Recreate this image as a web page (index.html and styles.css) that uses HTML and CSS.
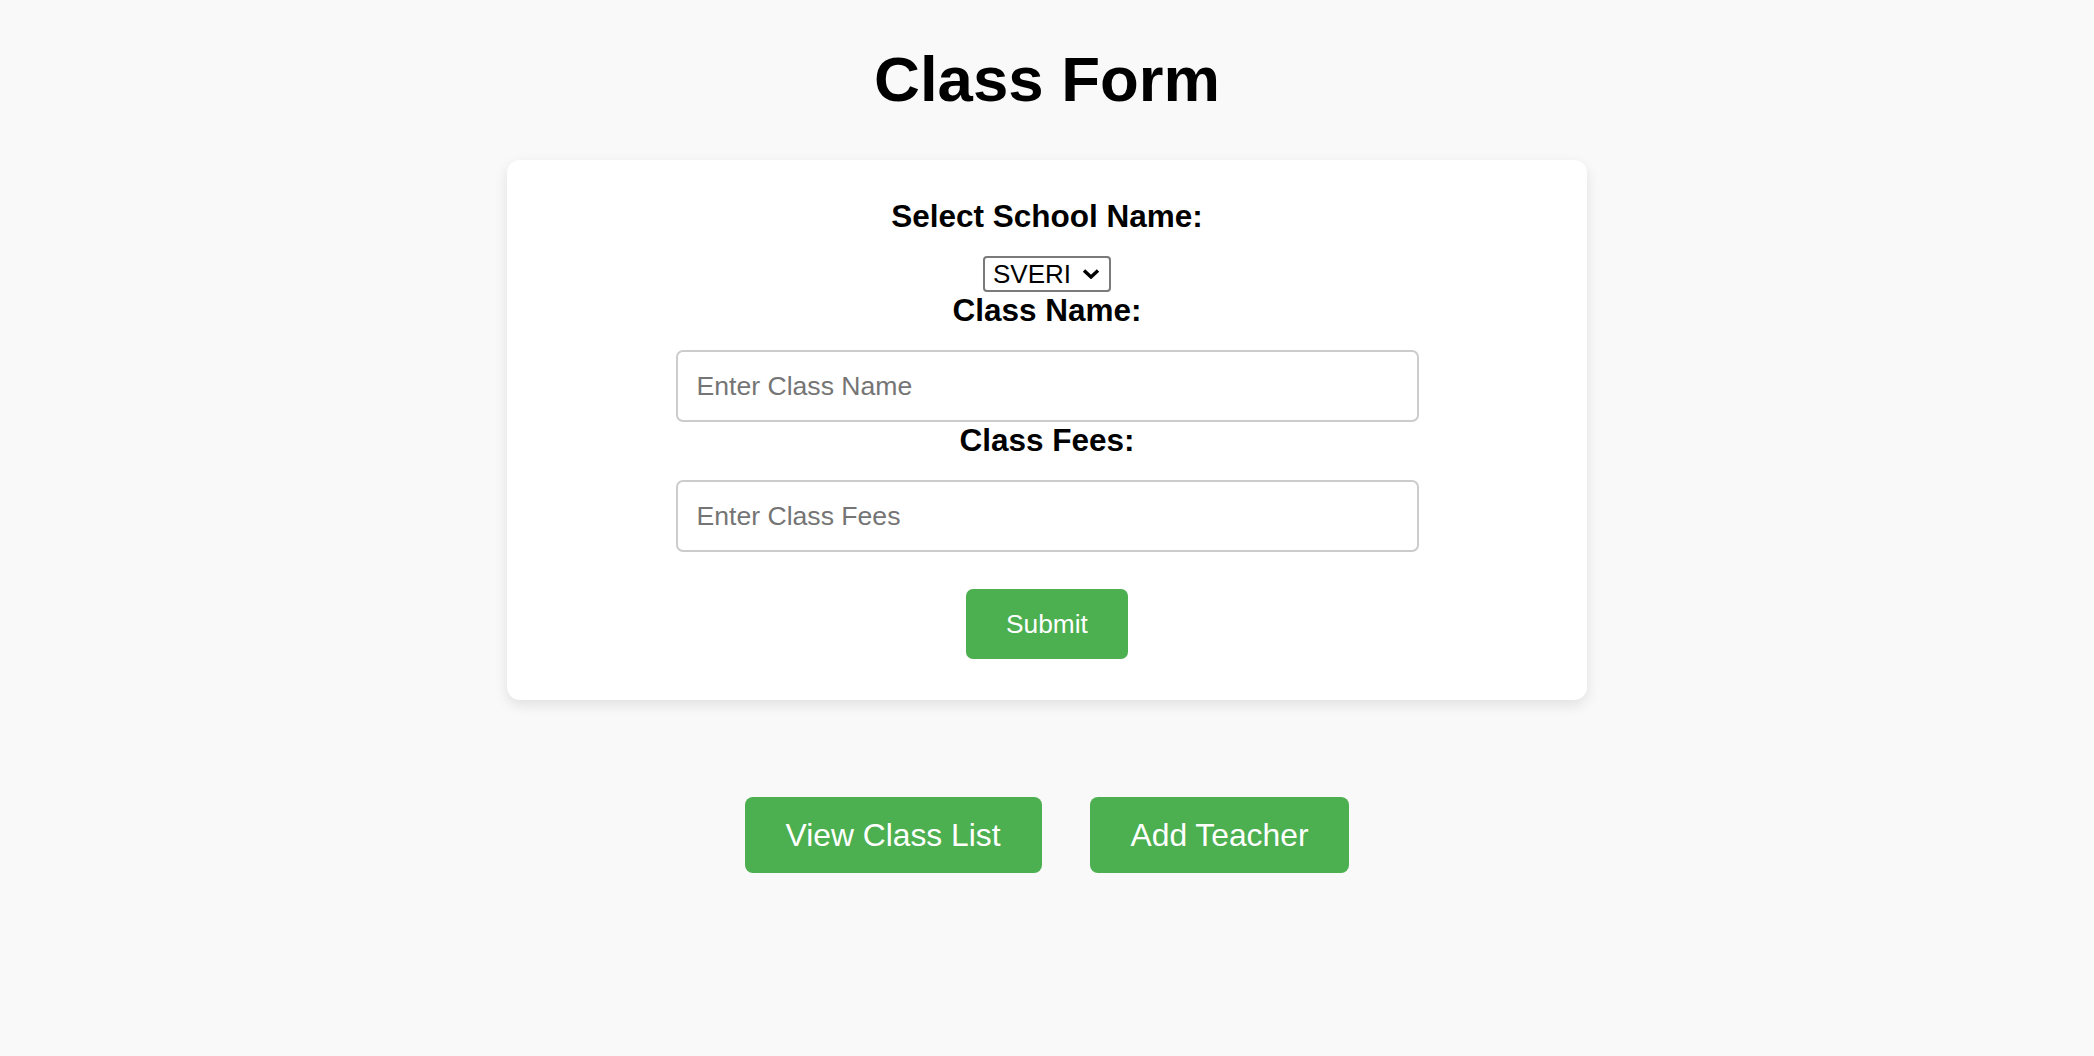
FILE: index.html
```html
<!DOCTYPE html>
<html lang="en">
<head>
<meta charset="utf-8">
<title>Class Form</title>
<link rel="stylesheet" href="styles.css">
</head>
<body>
  <main class="page">
    <h1 class="title">Class Form</h1>
    <form class="card">
      <label class="label" for="school">Select School Name:</label>
      <div class="select-wrap">
        <select id="school" class="select">
          <option>SVERI</option>
        </select>
        <svg class="chev" width="18" height="11" viewBox="0 0 18 11" aria-hidden="true">
          <path d="M2 2.5 L9 9 L16 2.5" fill="none" stroke="#000" stroke-width="3.4" stroke-linejoin="miter"/>
        </svg>
      </div>
      <label class="label" for="cname">Class Name:</label>
      <input id="cname" class="input" type="text" placeholder="Enter Class Name">
      <label class="label" for="cfees">Class Fees:</label>
      <input id="cfees" class="input" type="text" placeholder="Enter Class Fees">
      <button type="button" class="btn btn-submit">Submit</button>
    </form>
    <div class="actions">
      <a class="btn btn-big" href="#">View Class List</a>
      <a class="btn btn-big" href="#">Add Teacher</a>
    </div>
  </main>
</body>
</html>
```
FILE: styles.css
```css
* {
  box-sizing: border-box;
}

html, body {
  margin: 0;
  padding: 0;
  background: #f9f9f9;
}

body {
  font-family: "Liberation Sans", Arial, sans-serif;
  color: #000;
}

.page {
  display: flex;
  flex-direction: column;
  align-items: center;
}

.title {
  font-size: 63.5px;
  font-weight: bold;
  line-height: 72px;
  margin: 43px 0 45px;
}

.card {
  width: 1080px;
  background: #fff;
  border-radius: 13px;
  box-shadow: 0 5px 14px rgba(0, 0, 0, 0.1);
  padding: 38px 39px 41px;
  display: flex;
  flex-direction: column;
  align-items: center;
}

.label {
  font-size: 31.5px;
  font-weight: bold;
  line-height: 36px;
  margin-bottom: 22px;
}

.select-wrap {
  position: relative;
  width: 128px;
  height: 36px;
}

.select {
  appearance: none;
  -webkit-appearance: none;
  width: 128px;
  height: 36px;
  border: 2px solid #7a7a7a;
  border-radius: 4px;
  background: #fff;
  padding: 0 0 0 8px;
  font-family: "Liberation Sans", Arial, sans-serif;
  font-size: 26px;
  color: #000;
}

.chev {
  position: absolute;
  left: 99px;
  top: 12px;
  pointer-events: none;
}

.input {
  width: 743px;
  height: 72px;
  border: 2px solid #cccccc;
  border-radius: 7px;
  padding: 0 19px;
  font-family: "Liberation Sans", Arial, sans-serif;
  font-size: 26.6px;
  color: #000;
  background: #fff;
  outline: none;
}

.input::placeholder {
  color: #757575;
}

.btn {
  display: inline-flex;
  align-items: center;
  justify-content: center;
  background: #4caf50;
  color: #fff;
  border: none;
  text-decoration: none;
  font-family: "Liberation Sans", Arial, sans-serif;
  cursor: pointer;
}

.btn-submit {
  margin-top: 37px;
  height: 70px;
  padding: 0 40.5px;
  font-size: 26.3px;
  border-radius: 7px;
}

.actions {
  display: flex;
  gap: 48px;
  margin-top: 97px;
}

.btn-big {
  height: 76px;
  padding: 0 41px;
  font-size: 31.8px;
  border-radius: 8px;
}
```
